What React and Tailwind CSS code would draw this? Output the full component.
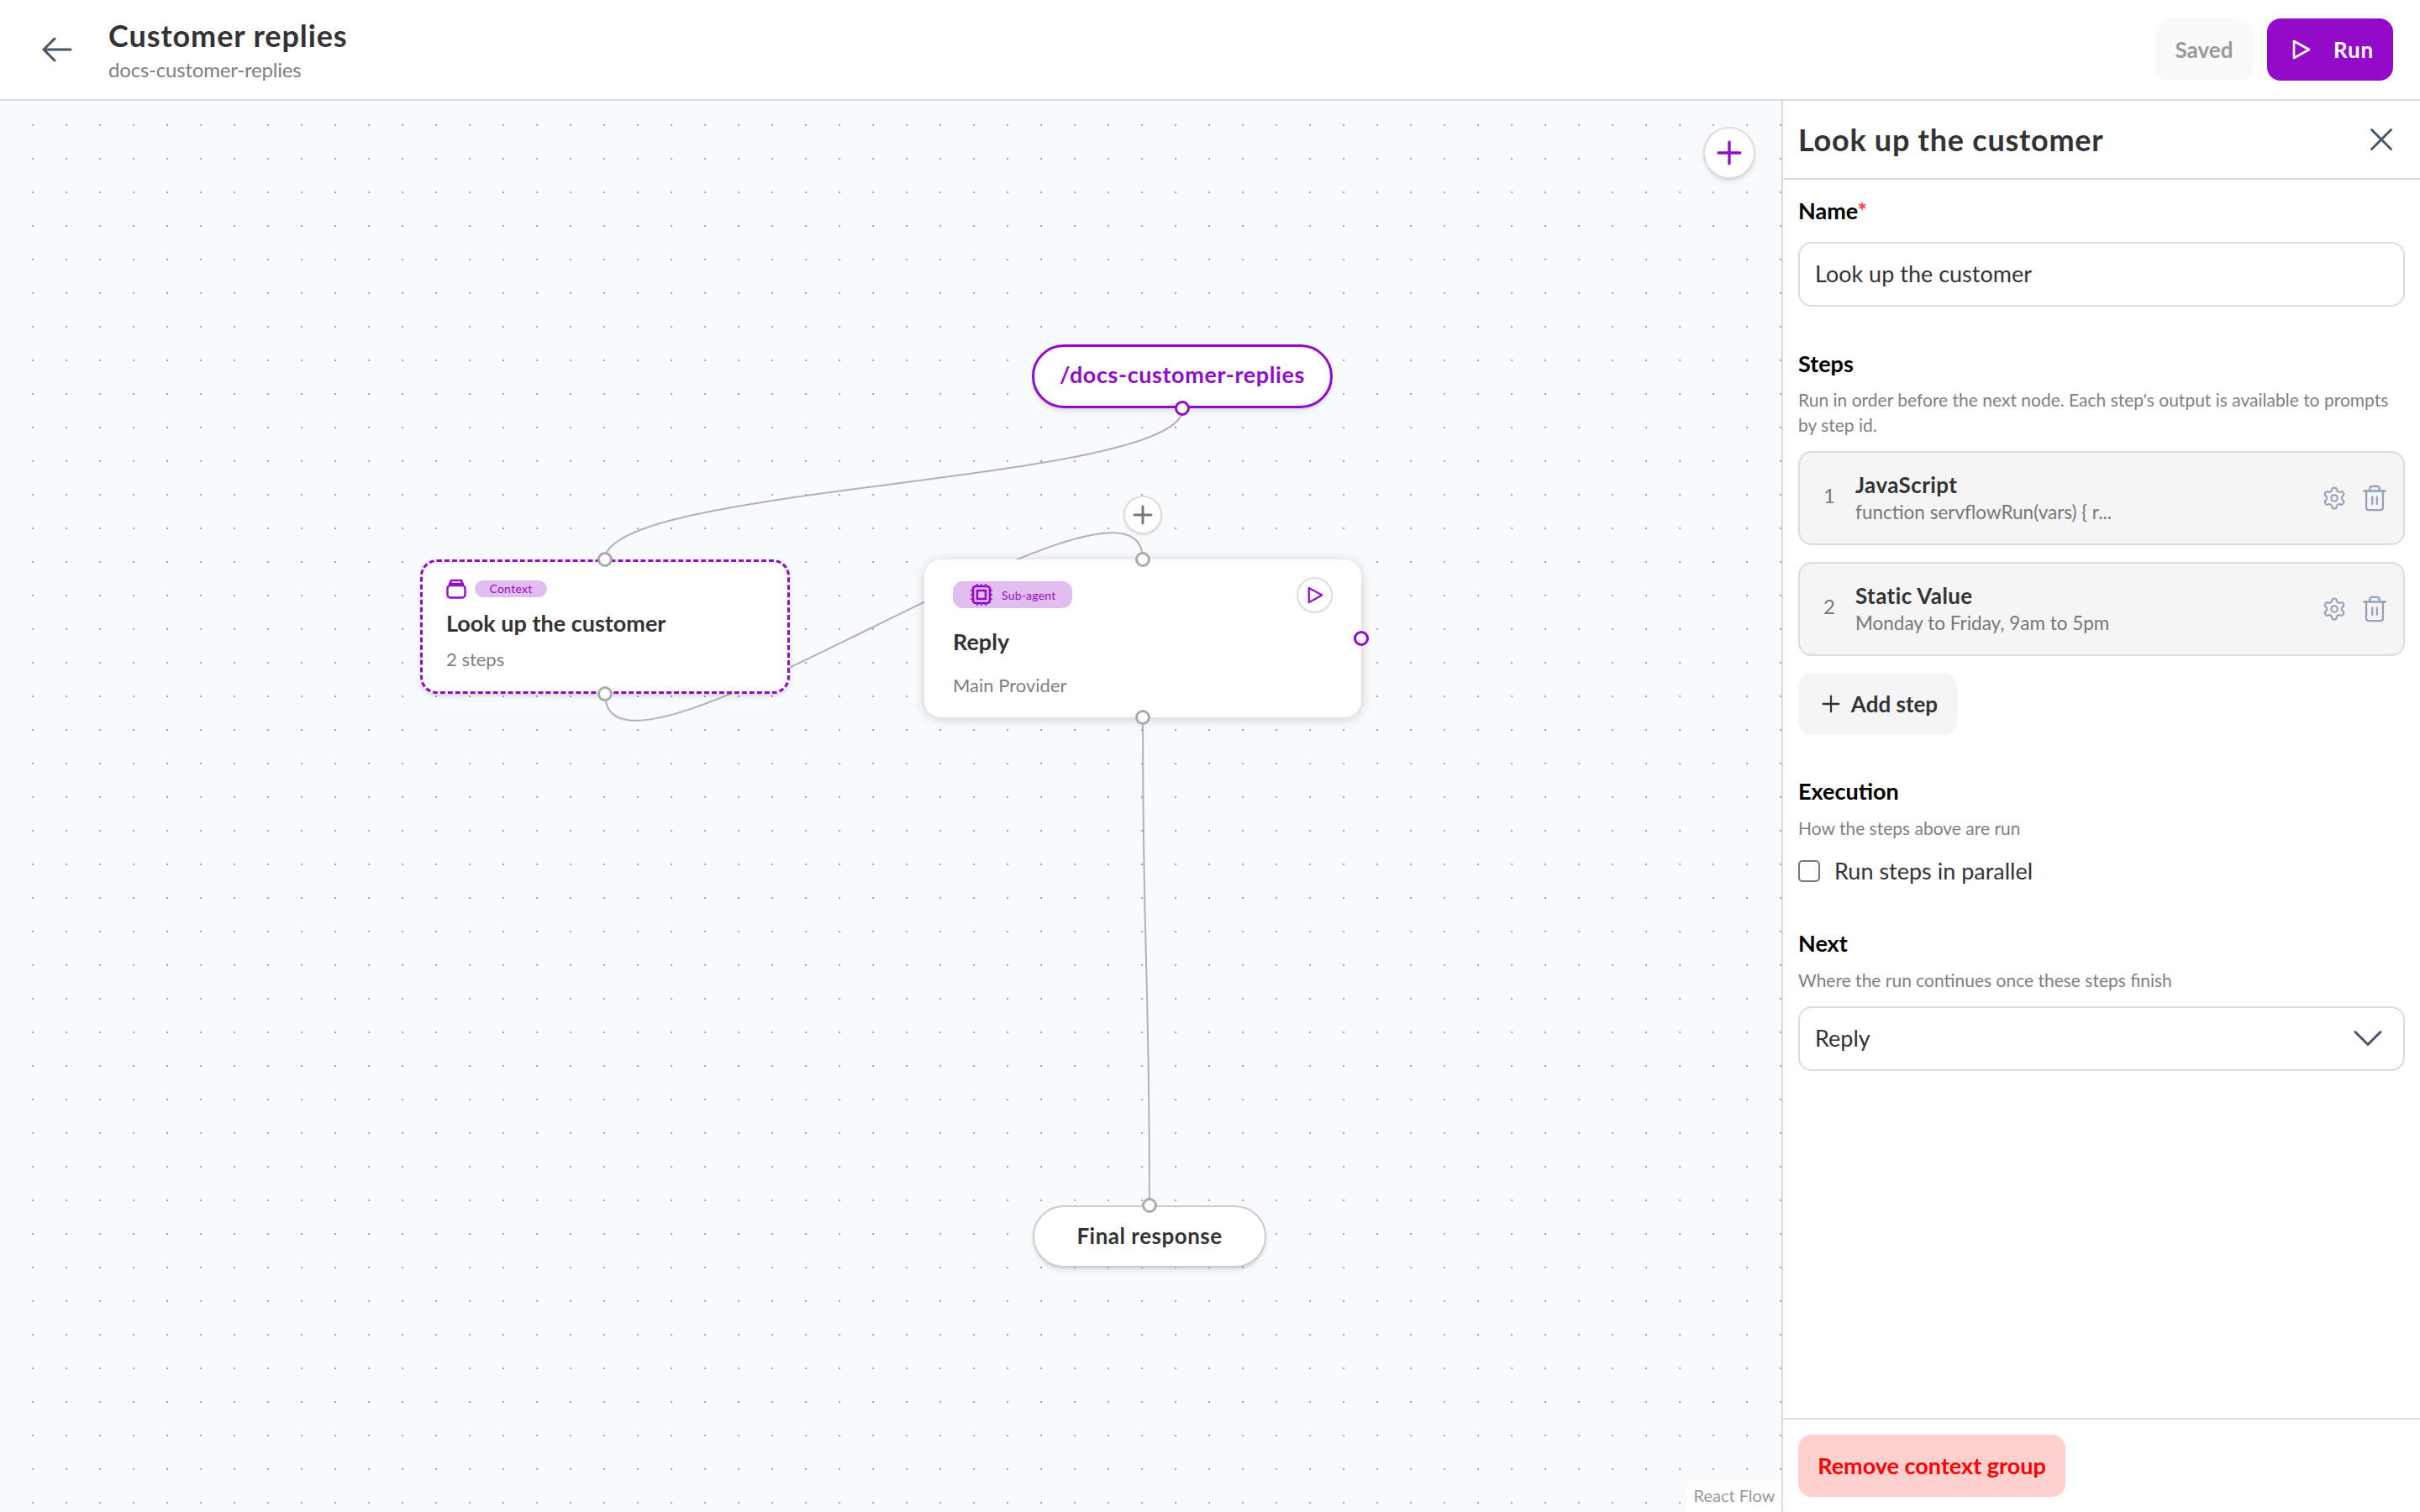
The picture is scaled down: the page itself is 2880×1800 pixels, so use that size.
import { Plus, X, Settings, Trash2, ChevronDown } from "lucide-react"

const Handle = ({ className }) => (
  <div className={`absolute w-[18px] h-[18px] rounded-full bg-white border-[3px] -translate-x-1/2 -translate-y-1/2 ${className}`} />
)

const PlayIcon = ({ className }) => (
  <svg className={className} viewBox="0 0 22 24" fill="none" stroke="currentColor" strokeWidth="2.6" strokeLinejoin="round">
    <path d="M2,2 L20,12 L2,22 Z" />
  </svg>
)

const StepRow = ({ n, name, sub }) => (
  <div className="h-[112px] flex items-center rounded-[16px] border-2 border-[#dcdcdc] bg-[#f5f5f5]">
    <span className="w-[66px] pl-[28px] text-[24px] text-[#777] -mt-[6px]">{n}</span>
    <div className="flex-1">
      <p className="text-[26px] leading-[34px] font-bold tracking-[0.4px] text-[#333]">{name}</p>
      <p className="text-[22.5px] leading-[32px] text-[#777]">{sub}</p>
    </div>
    <Settings className="w-[30px] h-[30px] text-[#94a3b8] mr-[16px]" strokeWidth={1.7} />
    <Trash2 className="w-[34px] h-[34px] text-[#94a3b8] mr-[17px]" strokeWidth={1.6} />
  </div>
)

const SectionLabel = ({ children }) => (
  <p className="text-[27px] leading-[34px] font-bold text-black">{children}</p>
)

const Hint = ({ children }) => (
  <p className="text-[21px] leading-[30px] text-[#808080]">{children}</p>
)

const App = () => {
  return (
    <div className="w-[2880px] h-[1800px] flex flex-col bg-white overflow-hidden font-['Lato',sans-serif] text-[#333]">
      <header className="h-[120px] shrink-0 flex items-center border-b-2 border-[#dcdcdc] pl-[50px] pr-[32px]">
        <svg width="36" height="30" viewBox="0 0 36 30" fill="none" stroke="#475569" strokeWidth="3" strokeLinecap="round" strokeLinejoin="round">
          <path d="M3,15 H34 M15,2 L2,15 L15,28" />
        </svg>
        <div className="ml-[43px] flex-1">
          <h1 className="text-[36px] leading-[44px] font-bold tracking-[0.9px]">Customer replies</h1>
          <p className="mt-[3px] text-[24px] leading-[32px] tracking-[-0.2px] text-[#808080]">docs-customer-replies</p>
        </div>
        <button className="h-[74px] w-[116px] rounded-[16px] bg-[#fafafa] text-[26px] font-bold text-[#999]">Saved</button>
        <button className="ml-[17px] h-[74px] w-[150px] rounded-[16px] bg-[#930bc8] text-white text-[26px] font-bold tracking-[0.8px] flex items-center pl-[30px] gap-[27px]">
          <PlayIcon className="w-[22px] h-[24px]" />
          Run
        </button>
      </header>

      <div className="flex-1 flex min-h-0">
        <main className="relative flex-1 bg-[#f9fafc] bg-[radial-gradient(#a0a0a0_1px,transparent_1px)] bg-[length:40px_40px] bg-[position:19px_9px]">
          <svg className="absolute left-0 top-[-120px]" width="2120" height="1800" fill="none" stroke="#b1b1b7" strokeWidth="2">
            <path d="M1408,486 C1408,576 720,576 720,666" />
            <path d="M720,826 C720,981 1360,511 1360,666" />
            <path d="M1360,854 C1360,1144 1368,1144 1368,1434" />
          </svg>

          <div className="absolute left-[1228px] top-[290px] w-[358px] h-[76px] pb-[3px] rounded-full border-[3px] border-[#930bc8] bg-white flex items-center justify-center text-[27px] tracking-[0.6px] font-bold text-[#930bc8] shadow-md">
            /docs-customer-replies
            <Handle className="left-1/2 top-[calc(100%+3px)] border-[#930bc8]" />
          </div>

          <div className="absolute left-[500px] top-[546px] w-[440px] h-[160px] rounded-[20px] border-[3px] border-dashed border-[#930bc8] bg-white shadow-md pl-[28px] pt-[20px]">
            <div className="flex items-center gap-[10px]">
              <svg width="24" height="24" viewBox="0 0 24 24" fill="none" stroke="#930bc8" strokeWidth="2.4">
                <rect x="1.5" y="8" width="21" height="14.5" rx="3.5" />
                <path d="M4,8 L6,2 H18 L20,8 M3,6 H21" />
              </svg>
              <span className="h-[20px] w-[86px] rounded-full bg-[#e2bdf0] text-[#930bc8] text-[14px] tracking-[0.3px] leading-[20px] text-center">Context</span>
            </div>
            <p className="mt-[11px] text-[27px] leading-[36px] font-bold">Look up the customer</p>
            <p className="mt-[9px] text-[22px] leading-[32px] text-[#808080]">2 steps</p>
            <Handle className="left-1/2 top-[-3px] border-[#aaa]" />
            <Handle className="left-1/2 top-[calc(100%+3px)] border-[#aaa]" />
          </div>

          <div className="absolute left-[1100px] top-[546px] w-[520px] h-[188px] rounded-[20px] bg-white shadow-[0_2px_14px_rgba(0,0,0,0.18)] pl-[34px] pt-[26px]">
            <div className="flex items-start justify-between pr-[34px]">
              <span className="h-[32px] w-[142px] rounded-[12px] bg-[#e2bdf0] text-[#930bc8] text-[14px] tracking-[0.2px] flex items-center gap-[10px] pl-[20px]">
                <svg width="28" height="28" viewBox="0 0 28 28" fill="none" stroke="#930bc8" strokeWidth="2.6">
                  <rect x="4" y="4" width="20" height="20" rx="3" />
                  <rect x="9" y="9" width="10" height="10" />
                  <path d="M9,1 V4 M14,1 V4 M19,1 V4 M9,24 V27 M14,24 V27 M19,24 V27 M1,9 H4 M1,14 H4 M1,19 H4 M24,9 H27 M24,14 H27 M24,19 H27" strokeWidth="1.6" />
                </svg>
                Sub-agent
              </span>
              <span className="w-[43px] h-[43px] -mt-[5px] rounded-full border-2 border-[#ddd] flex items-center justify-center">
                <PlayIcon className="w-[19px] h-[21px] ml-[2px] text-[#930bc8]" />
              </span>
            </div>
            <p className="mt-[16px] text-[27px] leading-[36px] font-bold">Reply</p>
            <p className="mt-[18px] text-[22px] leading-[32px] text-[#808080]">Main Provider</p>
            <Handle className="left-1/2 top-0 border-[#aaa]" />
            <Handle className="left-1/2 top-full border-[#aaa]" />
            <Handle className="left-full top-[94px] border-[#930bc8]" />
          </div>

          <div className="absolute left-[1337px] top-[470px] w-[46px] h-[46px] rounded-full bg-white border-2 border-[#ddd] shadow-sm flex items-center justify-center">
            <Plus className="w-[34px] h-[34px] text-[#777]" strokeWidth={2.1} />
          </div>

          <div className="absolute left-[1229px] top-[1315px] w-[278px] h-[74px] pb-[2px] rounded-full border-2 border-[#ccc] bg-white flex items-center justify-center text-[26px] tracking-[0.5px] font-bold shadow-md">
            Final response
            <Handle className="left-[137px] top-[-2px] border-[#aaa]" />
          </div>

          <button className="absolute right-[31px] top-[31px] w-[62px] h-[62px] rounded-full bg-white border-2 border-[#ddd] shadow-md flex items-center justify-center">
            <Plus className="w-[44px] h-[44px] text-[#930bc8]" strokeWidth={1.8} />
          </button>

          <div className="absolute right-0 bottom-0 h-[38px] w-[112px] bg-white/80 text-[20px] leading-[36px] text-center text-[#999]">React Flow</div>
        </main>

        <aside className="w-[760px] shrink-0 flex flex-col border-l-2 border-[#dcdcdc]">
          <div className="h-[94px] shrink-0 flex items-center justify-between border-b-2 border-[#dcdcdc] pl-[18px] pr-[23px]">
            <h2 className="text-[36px] font-bold tracking-[0.75px]">Look up the customer</h2>
            <X className="w-[46px] h-[46px] text-[#475569]" strokeWidth={1.5} />
          </div>
          <div className="flex-1 px-[18px] pt-[20px]">
            <SectionLabel>Name<span className="text-[#ef4444]">*</span></SectionLabel>
            <div className="mt-[20px] h-[77px] rounded-[16px] border-2 border-[#dcdcdc] flex items-center px-[18px] text-[27px]">Look up the customer</div>

            <div className="mt-[51px]"><SectionLabel>Steps</SectionLabel></div>
            <div className="mt-[11px]"><Hint>Run in order before the next node. Each step's output is available to prompts by step id.</Hint></div>
            <div className="mt-[16px] flex flex-col gap-[20px]">
              <StepRow n="1" name="JavaScript" sub="function servflowRun(vars) { r..." />
              <StepRow n="2" name="Static Value" sub="Monday to Friday, 9am to 5pm" />
            </div>
            <button className="mt-[20px] h-[74px] w-[189px] rounded-[16px] bg-[#f5f5f5] flex items-center justify-center gap-[8px] text-[26px] font-bold">
              <Plus className="w-[32px] h-[32px]" strokeWidth={1.7} /> Add step
            </button>

            <div className="mt-[50px]"><SectionLabel>Execution</SectionLabel></div>
            <div className="mt-[12px]"><Hint>How the steps above are run</Hint></div>
            <label className="mt-[16px] flex items-center gap-[17px] text-[27px]">
              <span className="w-[26px] h-[26px] rounded-[5px] border-2 border-[#777] bg-white" />
              Run steps in parallel
            </label>

            <div className="mt-[48px]"><SectionLabel>Next</SectionLabel></div>
            <div className="mt-[12px]"><Hint>Where the run continues once these steps finish</Hint></div>
            <div className="mt-[16px] h-[77px] rounded-[16px] border-2 border-[#dcdcdc] flex items-center justify-between pl-[18px] pr-[12px] text-[27px]">
              Reply
              <ChevronDown className="w-[60px] h-[60px] text-[#475569]" strokeWidth={1.2} />
            </div>
          </div>
          <div className="h-[112px] shrink-0 border-t-2 border-[#dcdcdc] pl-[18px] pt-[18px]">
            <button className="h-[74px] w-[318px] rounded-[16px] bg-[#ffd0d0] text-[#ff0000] text-[27px] font-bold">Remove context group</button>
          </div>
        </aside>
      </div>
    </div>
  )
}

export default App
